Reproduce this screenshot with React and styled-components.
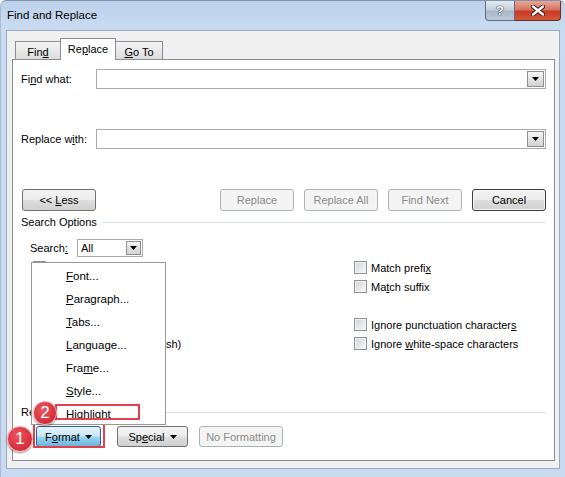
import React from 'react';
import styled, { createGlobalStyle, css } from 'styled-components';

const GlobalStyle = createGlobalStyle`
  html, body { margin: 0; padding: 0; background: #fff; }
  body {
    font-family: "Liberation Sans", Arial, sans-serif;
    font-size: 11px;
    color: #000;
  }
  #root { width: 565px; height: 477px; }
  * { box-sizing: border-box; }
`;

const Window = styled.div`
  position: relative;
  width: 565px;
  height: 477px;
  display: flex;
  flex-direction: column;
  background: linear-gradient(180deg, #bcd2eb 0px, #c9dcf1 30px, #c7daef 100%);
  border-top: 1px solid #8193aa;
  border-left: 1px solid #a9bcd2;
  border-top-left-radius: 6px;
  border-top-right-radius: 6px;
  overflow: hidden;
`;

const TitleBar = styled.div`
  height: 29px;
  display: flex;
  align-items: flex-start;
  flex-shrink: 0;
`;

const Title = styled.div`
  padding-left: 6px;
  line-height: 29px;
  font-size: 11.5px;
  color: #000;
`;

const Controls = styled.div`
  margin-left: auto;
  margin-right: 4px;
  display: flex;
`;

const CaptionButton = styled.div`
  height: 20px;
  display: flex;
  align-items: center;
  justify-content: center;
  border: 1px solid #5f6f83;
  border-top: none;
  ${(p) =>
    p.$close
      ? css`
          width: 46px;
          border-left: none;
          border-color: #6e2b22;
          border-bottom-right-radius: 4px;
          background: linear-gradient(180deg, #e9a899 0%, #d7735f 45%, #c63a22 55%, #d25a3e 100%);
        `
      : css`
          width: 30px;
          border-bottom-left-radius: 4px;
          background: linear-gradient(180deg, #e3e9f0 0%, #c6d1de 45%, #a9b7c8 55%, #bccada 100%);
        `}
`;

const HelpGlyph = styled.span`
  font-family: "Liberation Sans", Arial, sans-serif;
  font-weight: bold;
  font-size: 13px;
  color: #fff;
  text-shadow: 0 0 1px #2b3a4e, 0 0 1px #2b3a4e, 0 0 1px #2b3a4e;
`;

const Client = styled.div`
  flex: 1;
  margin: 0 5px 8px 5px;
  background: #f0f0f0;
  border: 1px solid #9aaac0;
  padding: 7px 4px 7px 5px;
  display: flex;
  flex-direction: column;
`;

const TabRow = styled.div`
  display: flex;
  align-items: flex-end;
  padding-left: 3px;
  margin-bottom: -1px;
  position: relative;
  z-index: 1;
`;

const Tab = styled.div`
  display: flex;
  align-items: center;
  justify-content: center;
  border: 1px solid #898c95;
  margin-left: ${(p) => (p.$first ? '0' : '-1px')};
  width: ${(p) => p.$w}px;
  ${(p) =>
    p.$active
      ? css`
          height: 22px;
          background: #fff;
          border-bottom: none;
          padding-bottom: 1px;
        `
      : css`
          height: 19px;
          background: linear-gradient(180deg, #f4f4f4 0%, #e9e9e9 50%, #dcdcdc 100%);
          padding-top: 2px;
        `}
`;

const Panel = styled.div`
  flex: 1;
  position: relative;
  background: #fff;
  border: 1px solid #898c95;
  padding: 9px 8px 13px 8px;
  display: flex;
  flex-direction: column;
`;

const FieldRow = styled.div`
  display: flex;
  align-items: center;
  height: 20px;
  margin-top: ${(p) => p.$mt || 0}px;
`;

const FieldLabel = styled.div`
  width: 75px;
`;

const Combo = styled.div`
  flex: 1;
  height: 20px;
  border: 1px solid #a9abb2;
  background: #fff;
  display: flex;
  align-items: center;
  justify-content: flex-end;
  padding-right: 1px;
`;

const DropBtn = styled.div`
  width: ${(p) => p.$w || 17}px;
  height: ${(p) => p.$h || 16}px;
  border: 1px solid #8e8f91;
  background: linear-gradient(180deg, #f6f6f6 0%, #e3e3e3 50%, #d2d2d2 100%);
  display: flex;
  align-items: center;
  justify-content: center;
`;

const Caret = () => (
  <svg width="7" height="4" viewBox="0 0 7 4">
    <path d="M0 0 L7 0 L3.5 4 Z" fill="#000" />
  </svg>
);

const ButtonRow = styled.div`
  display: flex;
  align-items: center;
  height: ${(p) => p.$h || 22}px;
  margin-top: ${(p) => p.$mt || 0}px;
  padding-left: ${(p) => p.$pl || 0}px;
  gap: ${(p) => p.$gap ?? 10}px;
`;

const Spacer = styled.div`
  flex: 1;
`;

const Button = styled.div`
  position: relative;
  width: ${(p) => p.$w || 74}px;
  height: ${(p) => p.$h || 22}px;
  margin-right: ${(p) => p.$mr || 0}px;
  display: flex;
  align-items: center;
  justify-content: center;
  gap: 5px;
  border-radius: 3px;
  border: 1px solid #707070;
  background: linear-gradient(180deg, #f4f4f4 0%, #ececec 48%, #dedede 52%, #d0d0d0 100%);
  color: #000;
  white-space: nowrap;
  ${(p) =>
    p.$disabled &&
    css`
      border-color: #adb2b5;
      background: #f4f4f4;
      color: #8a8a8a;
    `}
  ${(p) =>
    p.$default &&
    css`
      border-color: #3d3d3d;
      box-shadow: inset 0 0 0 1px #f8f8f8;
    `}
  ${(p) =>
    p.$pressed &&
    css`
      border-color: #2c628b;
      background: linear-gradient(180deg, #e6f5fc 0%, #c6e6f7 48%, #9dd4f0 52%, #6bb5dd 100%);
    `}
  ${(p) =>
    p.$marked &&
    css`
      &::after {
        content: '';
        position: absolute;
        left: -4px;
        right: -5px;
        top: -4px;
        bottom: -2px;
        border: 2px solid #e3404d;
      }
    `}
`;

const SectionHeader = styled.div`
  display: flex;
  align-items: center;
  height: 14px;
  margin-top: ${(p) => p.$mt || 0}px;
`;

const SectionLine = styled.div`
  flex: 1;
  height: 1px;
  margin-left: 5px;
  background: #d5dfe5;
`;

const SearchRow = styled.div`
  display: flex;
  align-items: center;
  height: 18px;
  margin-top: 10px;
  padding-left: 9px;
`;

const SearchLabel = styled.div`
  width: 47px;
`;

const Select = styled.div`
  width: 66px;
  height: 18px;
  border: 1px solid #a9abb2;
  display: flex;
  align-items: center;
  justify-content: space-between;
  padding-left: 3px;
  padding-right: 1px;
`;

const Options = styled.div`
  display: grid;
  grid-template-columns: 321px 1fr;
  margin-top: 1px;
  padding-left: 12px;
`;

const OptionColumn = styled.div`
  display: flex;
  flex-direction: column;
`;

const OptionRow = styled.div`
  height: 19px;
  display: flex;
  align-items: center;
  gap: 4px;
  white-space: nowrap;
`;

const OptionText = styled.span`
  margin-left: ${(p) => p.$ml || 0}px;
`;

const Checkbox = styled.span`
  width: 13px;
  height: 13px;
  flex-shrink: 0;
  border: 1px solid #8e8f8f;
  background: linear-gradient(135deg, #cfd3d8 0%, #e8eaec 60%, #f7f7f7 100%);
  box-shadow: inset 0 0 0 1px #f4f4f4;
`;

const Menu = styled.div`
  position: absolute;
  left: 18px;
  top: 202px;
  width: 135px;
  height: 163px;
  border: 1px solid #979797;
  background: #fff;
  padding-top: 2px;
  z-index: 2;
`;

const MenuItem = styled.div`
  position: relative;
  height: 23px;
  line-height: 23px;
  padding-left: 34px;
  font-size: 11.5px;
`;

const MarkBox = styled.div`
  position: absolute;
  left: 23px;
  top: 1px;
  width: 85px;
  height: 16px;
  border: 2px solid #e3404d;
`;

const Badge = styled.div`
  position: absolute;
  left: ${(p) => p.$x}px;
  top: ${(p) => p.$y}px;
  width: ${(p) => p.$d}px;
  height: ${(p) => p.$d}px;
  border-radius: 50%;
  background: radial-gradient(circle at 40% 35%, #ee5560 0%, #d9323e 60%, #c2242f 100%);
  border: 1px solid #f1b3b7;
  box-shadow: 0 1px 2px rgba(0, 0, 0, 0.45);
  color: #fff;
  font-family: "Liberation Sans", Arial, sans-serif;
  font-size: 17px;
  display: flex;
  align-items: center;
  justify-content: center;
  z-index: 5;
`;

const U = styled.span`
  text-decoration: underline;
  text-underline-offset: 1px;
`;

/* The left column sits beneath the open Format menu; only the tail of the
   last label ("...sh)") is visible to the right of the menu. */
const leftOptions = [null, null, null, null, 'sh)'];

const rightOptions = [
  <>Match prefi<U>x</U></>,
  <>Ma<U>t</U>ch suffix</>,
  null,
  <>Ignore punctuation character<U>s</U></>,
  <>Ignore <U>w</U>hite-space characters</>,
];

const menuItems = [
  <><U>F</U>ont...</>,
  <><U>P</U>aragraph...</>,
  <><U>T</U>abs...</>,
  <><U>L</U>anguage...</>,
  <>Fra<U>m</U>e...</>,
  <><U>S</U>tyle...</>,
  <>Highlight</>,
];

export default function App() {
  return (
    <>
      <GlobalStyle />
      <Window>
        <TitleBar>
          <Title>Find and Replace</Title>
          <Controls>
            <CaptionButton>
              <HelpGlyph>?</HelpGlyph>
            </CaptionButton>
            <CaptionButton $close>
              <svg width="14" height="11" viewBox="0 0 14 11">
                <path
                  d="M2 1.5 L12 9.5 M12 1.5 L2 9.5"
                  stroke="#3b1510"
                  strokeWidth="4.2"
                  strokeLinecap="round"
                />
                <path
                  d="M2 1.5 L12 9.5 M12 1.5 L2 9.5"
                  stroke="#fff"
                  strokeWidth="2.4"
                  strokeLinecap="round"
                />
              </svg>
            </CaptionButton>
          </Controls>
        </TitleBar>
        <Client>
          <TabRow>
            <Tab $first $w={46}>
              <span>
                Fin<U>d</U>
              </span>
            </Tab>
            <Tab $active $w={56}>
              <span>
                Re<U>p</U>lace
              </span>
            </Tab>
            <Tab $w={48}>
              <span>
                <U>G</U>o To
              </span>
            </Tab>
          </TabRow>
          <Panel>
            <FieldRow>
              <FieldLabel>
                Fi<U>n</U>d what:
              </FieldLabel>
              <Combo>
                <DropBtn>
                  <Caret />
                </DropBtn>
              </Combo>
            </FieldRow>
            <FieldRow $mt={40}>
              <FieldLabel>
                Replace w<U>i</U>th:
              </FieldLabel>
              <Combo>
                <DropBtn>
                  <Caret />
                </DropBtn>
              </Combo>
            </FieldRow>
            <ButtonRow $mt={40} $pl={1}>
              <Button>
                <span>
                  &lt;&lt; <U>L</U>ess
                </span>
              </Button>
              <Spacer />
              <Button $disabled>Replace</Button>
              <Button $disabled>Replace All</Button>
              <Button $disabled>Find Next</Button>
              <Button $default>Cancel</Button>
            </ButtonRow>
            <SectionHeader $mt={4}>
              <span>Search Options</span>
              <SectionLine />
            </SectionHeader>
            <SearchRow>
              <SearchLabel>
                Search<U>:</U>
              </SearchLabel>
              <Select>
                <span>All</span>
                <DropBtn $w={15} $h={14}>
                  <Caret />
                </DropBtn>
              </Select>
            </SearchRow>
            <Options>
              <OptionColumn>
                {leftOptions.map((t, i) => (
                  <OptionRow key={i}>
                    <Checkbox />
                    {t && <OptionText $ml={116}>{t}</OptionText>}
                  </OptionRow>
                ))}
              </OptionColumn>
              <OptionColumn>
                {rightOptions.map((t, i) => (
                  <OptionRow key={i}>
                    {t && (
                      <>
                        <Checkbox />
                        <OptionText>{t}</OptionText>
                      </>
                    )}
                  </OptionRow>
                ))}
              </OptionColumn>
            </Options>
            <SectionHeader $mt={52}>
              <span>Re</span>
              <SectionLine />
            </SectionHeader>
            <ButtonRow $mt={7} $h={21} $pl={15} $gap={0}>
              <Button $w={65} $h={21} $pressed $marked $mr={16}>
                <span>
                  F<U>o</U>rmat
                </span>
                <Caret />
              </Button>
              <Button $w={71} $h={21} $mr={11}>
                <span>
                  Sp<U>e</U>cial
                </span>
                <Caret />
              </Button>
              <Button $w={84} $h={21} $disabled>
                No Formatting
              </Button>
            </ButtonRow>
            <Menu>
              {menuItems.map((m, i) => (
                <MenuItem key={i}>
                  {i === menuItems.length - 1 && <MarkBox />}
                  {m}
                </MenuItem>
              ))}
            </Menu>
          </Panel>
        </Client>
        <Badge $x={32} $y={400} $d={24}>
          2
        </Badge>
        <Badge $x={6} $y={425} $d={26}>
          1
        </Badge>
      </Window>
    </>
  );
}
